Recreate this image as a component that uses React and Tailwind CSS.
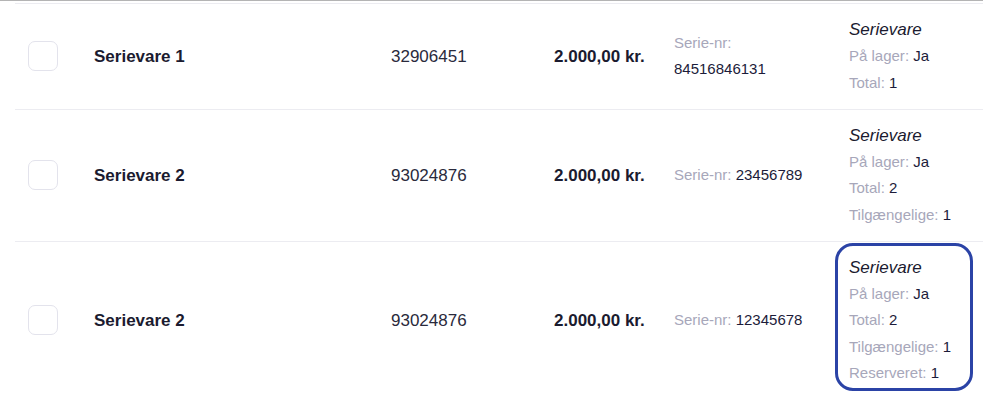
import React from "react";

const rows = [
  {
    name: "Serievare 1",
    number: "32906451",
    price: "2.000,00 kr.",
    serial: "84516846131",
    wrapSerial: true,
    info: [
      ["På lager", "Ja"],
      ["Total", "1"],
    ],
  },
  {
    name: "Serievare 2",
    number: "93024876",
    price: "2.000,00 kr.",
    serial: "23456789",
    info: [
      ["På lager", "Ja"],
      ["Total", "2"],
      ["Tilgængelige", "1"],
    ],
  },
  {
    name: "Serievare 2",
    number: "93024876",
    price: "2.000,00 kr.",
    serial: "12345678",
    highlight: true,
    info: [
      ["På lager", "Ja"],
      ["Total", "2"],
      ["Tilgængelige", "1"],
      ["Reserveret", "1"],
    ],
  },
];

function Row({ row }) {
  return (
    <div className="flex items-center border-b border-[#ececf1] py-[13px]">
      {/* Checkbox */}
      <div className="w-[79px] pl-[13px] shrink-0">
        <div className="w-[30px] h-[30px] rounded-[7px] border border-[#e3e3ec] bg-white" />
      </div>

      <div className="w-[297px] shrink-0 text-[17px] font-bold text-[#1b1b2f]">{row.name}</div>
      <div className="w-[163px] shrink-0 text-[17px] text-[#2a2a3c]">{row.number}</div>
      <div className="w-[120px] shrink-0 text-[17px] font-bold text-[#1b1b2f]">{row.price}</div>

      {/* Serial number */}
      <div className="w-[175px] shrink-0 pr-[35px] text-[15px] leading-[26.25px]">
        {row.wrapSerial ? (
          <>
            <div className="text-[#a7a7ba]">Serie-nr:</div>
            <div className="text-[#1c1c3a]">{row.serial}</div>
          </>
        ) : (
          <div>
            <span className="text-[#a7a7ba]">Serie-nr: </span>
            <span className="text-[#1c1c3a]">{row.serial}</span>
          </div>
        )}
      </div>

      {/* Stock info */}
      <div className="relative shrink-0 leading-[26.25px]">
        <div className="text-[17px] italic text-[#1b1b2f]">Serievare</div>
        {row.info.map(([label, value]) => (
          <div key={label} className="text-[15px]">
            <span className="text-[#a7a7ba]">{label}: </span>
            <span className="text-[#1c1c3a]">{value}</span>
          </div>
        ))}
        {row.highlight && (
          <div className="absolute -left-[14px] -top-[12px] w-[138px] h-[148px] border-[3px] border-[#2b43a6] rounded-[18px] pointer-events-none" />
        )}
      </div>
    </div>
  );
}

export default function App() {
  return (
    <div className="w-[983px] h-[399px] overflow-hidden bg-white font-['Liberation_Sans',Arial,sans-serif]">
      <div className="border-t border-[#b4b4b4] pt-[2px]">
        <div className="ml-[15px] border-t border-[#ececf1]">
          {rows.map((row, i) => (
            <Row key={i} row={row} />
          ))}
        </div>
      </div>
    </div>
  );
}
